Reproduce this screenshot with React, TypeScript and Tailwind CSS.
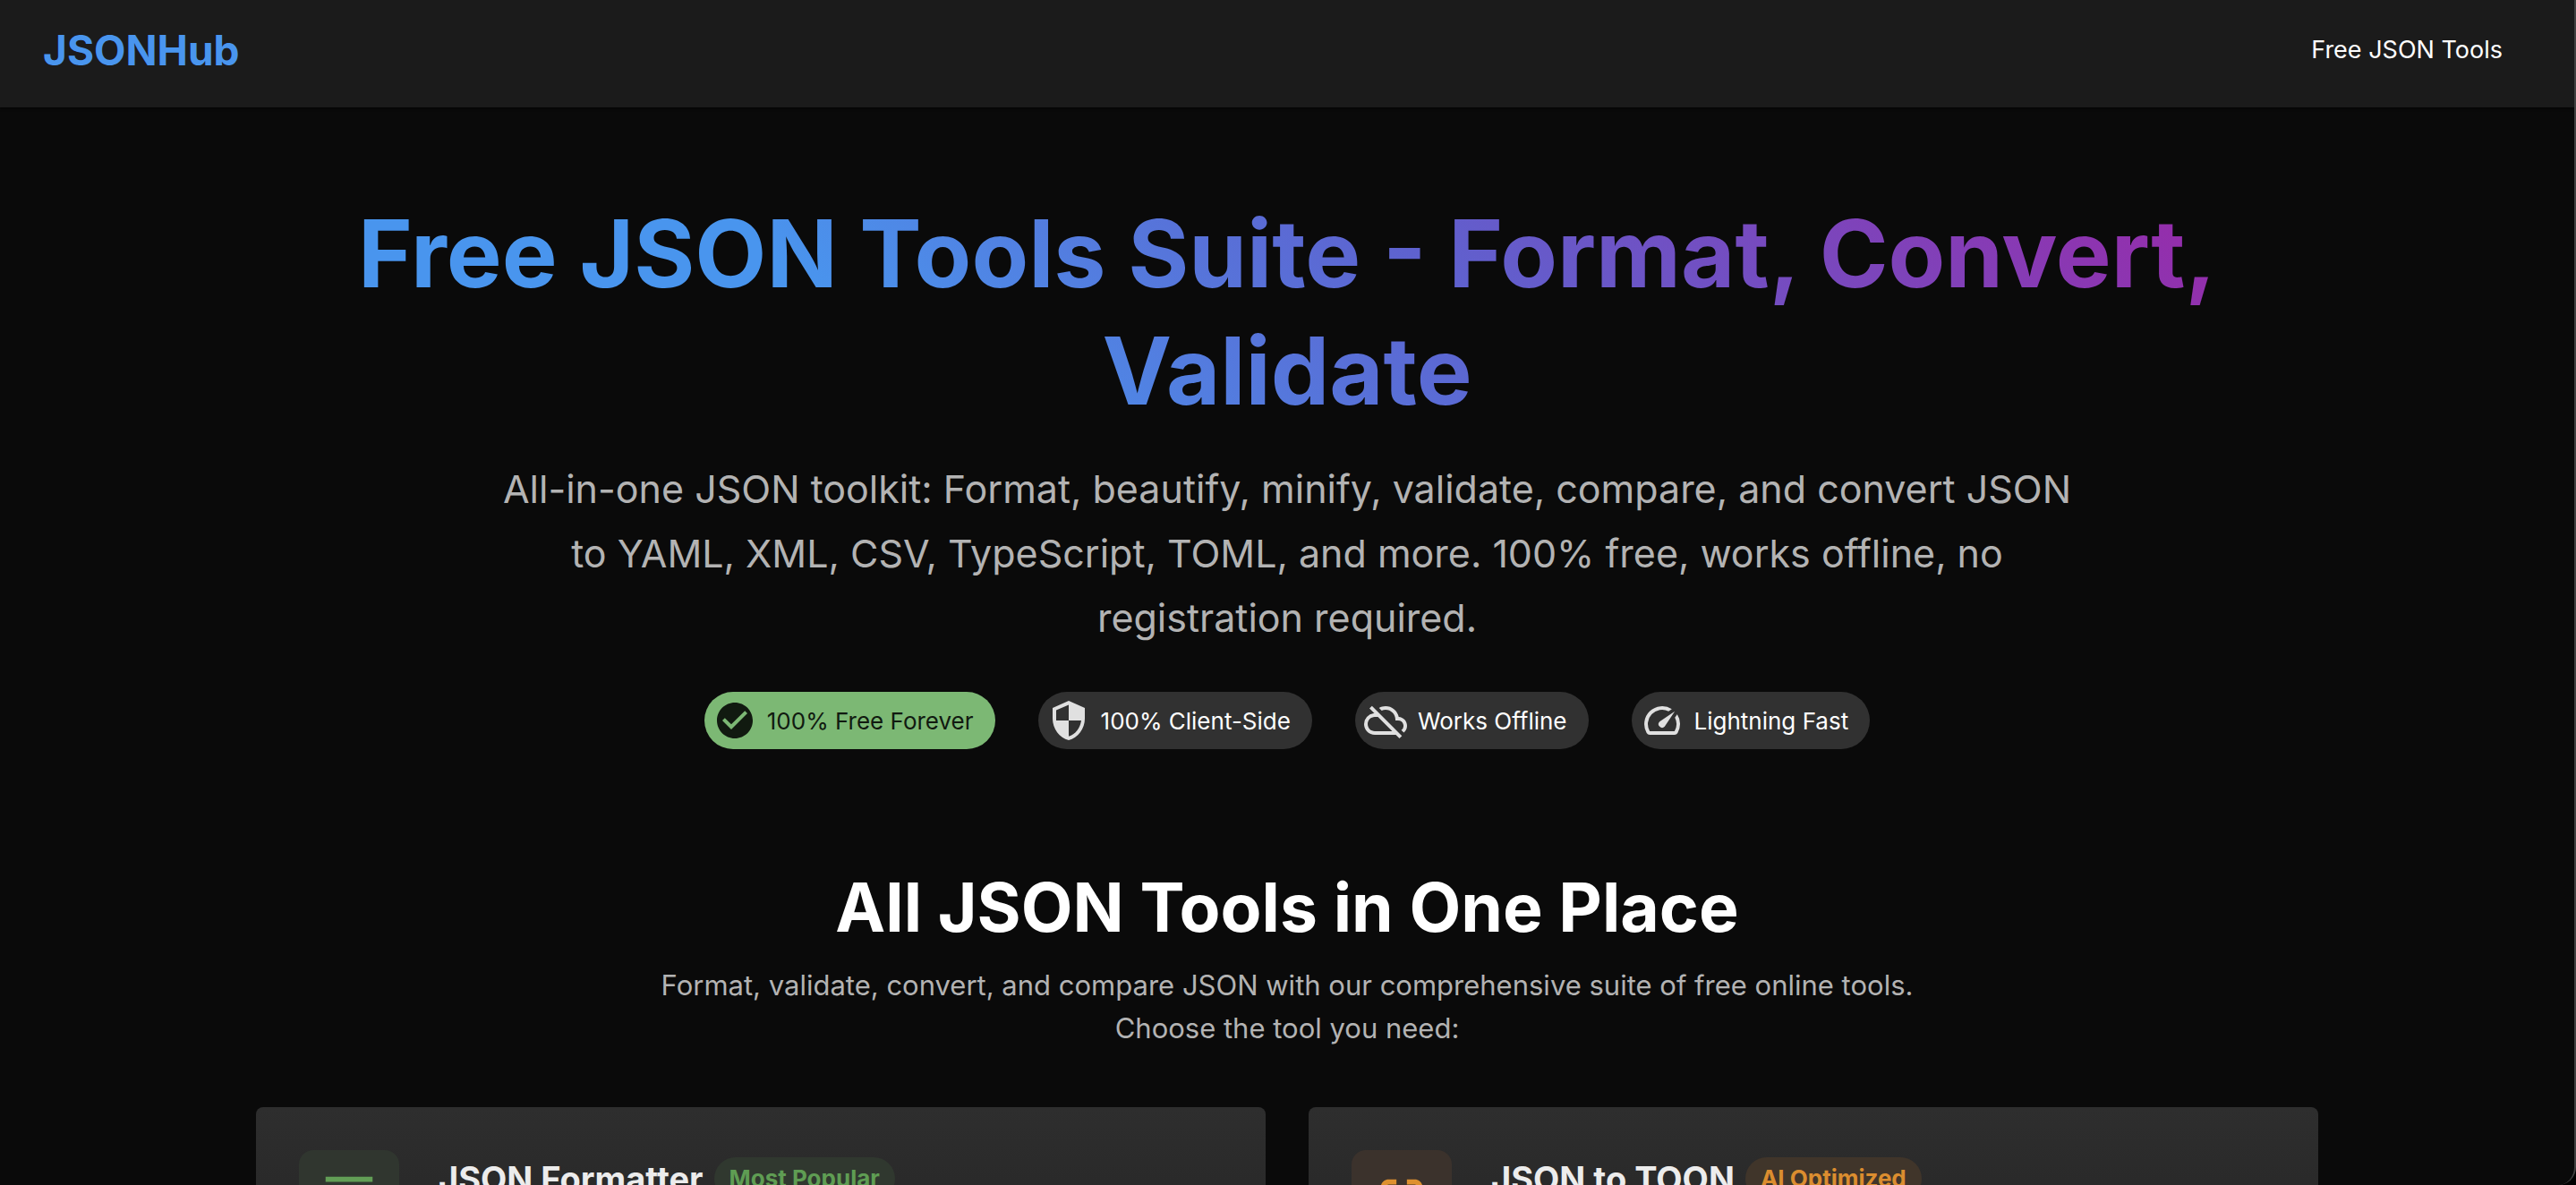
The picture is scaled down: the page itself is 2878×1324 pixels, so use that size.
import { MdCheckCircle, MdSecurity, MdOutlineCloudOff, MdSpeed, MdFormatAlignLeft, MdDataObject } from "react-icons/md";
import type { IconType } from "react-icons";

type Chip = { label: string; icon: IconType; chip: string; iconColor: string };

const chips: Chip[] = [
  { label: "100% Free Forever", icon: MdCheckCircle, chip: "bg-[#7cb874] text-[#111a10]", iconColor: "text-[#111a10]" },
  { label: "100% Client-Side", icon: MdSecurity, chip: "bg-[#313131] text-white", iconColor: "text-[#e0e0e0]" },
  { label: "Works Offline", icon: MdOutlineCloudOff, chip: "bg-[#313131] text-white", iconColor: "text-[#e0e0e0]" },
  { label: "Lightning Fast", icon: MdSpeed, chip: "bg-[#313131] text-white", iconColor: "text-[#e0e0e0]" },
];

type Tool = { title: string; badge: string; icon: IconType; tile: string; badgeStyle: string };

const tools: Tool[] = [
  {
    title: "JSON Formatter",
    badge: "Most Popular",
    icon: MdFormatAlignLeft,
    tile: "bg-[#30362f] text-[#629e56]",
    badgeStyle: "bg-[#30382f] text-[#5f9d53]",
  },
  {
    title: "JSON to TOON",
    badge: "AI Optimized",
    icon: MdDataObject,
    tile: "bg-[#3b322c] text-[#de902f]",
    badgeStyle: "bg-[#40352a] text-[#db8d2f]",
  },
];

export default function App() {
  return (
    <div className="bg-black">
      <div className="h-screen overflow-hidden rounded-br-[20px] border-r-2 border-[#414141] bg-[#0a0a0a] font-[Inter,sans-serif] text-white">
        <header className="flex h-[120px] items-center justify-between bg-[#1b1b1b] px-12 pb-2 shadow-sm shadow-black/60">
          <a href="#" className="text-[46px] leading-[56px] font-bold text-[#4995ee]">JSONHub</a>
          <nav className="pr-8">
            <a href="#tools" className="text-[27px] leading-10">Free JSON Tools</a>
          </nav>
        </header>
        <main className="mx-auto max-w-[2304px]">
          <section className="pt-[98px] text-center">
            <h1 className="bg-linear-45/srgb from-[#4995ee] from-30% via-[#5e62cf] via-58% to-[#982aa9] to-95% bg-clip-text text-[104px] leading-[131px] font-bold text-transparent">
              Free JSON Tools Suite - Format, Convert, Validate
            </h1>
            <p className="mx-auto mt-[30px] max-w-[1800px] text-[43px] leading-[72px] text-[#b3b3b3]">
              All-in-one JSON toolkit: Format, beautify, minify, validate, compare, and convert JSON to YAML, XML, CSV, TypeScript, TOML, and more. 100% free, works offline, no registration required.
            </p>
            <ul className="mt-[47px] flex flex-wrap justify-center gap-12">
              {chips.map(({ label, icon: Icon, chip, iconColor }) => (
                <li key={label} className={`flex h-16 items-center gap-3 rounded-full pr-6 pl-[10px] text-[26px] ${chip}`}>
                  <Icon className={`size-12 ${iconColor}`} />
                  <span>{label}</span>
                </li>
              ))}
            </ul>
          </section>
          <section id="tools" className="pt-32">
            <div className="text-center">
              <h2 className="text-[75px] leading-[98px] font-bold">All JSON Tools in One Place</h2>
              <p className="mx-auto mt-[14px] max-w-[1400px] text-[31px] leading-12 text-[#b3b3b3]">
                Format, validate, convert, and compare JSON with our comprehensive suite of free online tools. Choose the tool you need:
              </p>
            </div>
            <div className="mt-16 grid grid-cols-2 gap-12">
              {tools.map(({ title, badge, icon: Icon, tile, badgeStyle }) => (
                <article key={title} className="flex items-start gap-11 rounded-lg bg-linear-to-b from-[#2e2e2e] to-[#242424] p-12">
                  <div className={`flex size-28 items-center justify-center rounded-2xl ${tile}`}>
                    <Icon className="size-[70px]" />
                  </div>
                  <div className="flex items-center gap-3 pt-2">
                    <h3 className="text-[38px] leading-12 font-bold text-[#ececec]">{title}</h3>
                    <span className={`rounded-full px-[17px] text-[26px] leading-12 font-bold ${badgeStyle}`}>{badge}</span>
                  </div>
                </article>
              ))}
            </div>
          </section>
        </main>
      </div>
    </div>
  );
}
